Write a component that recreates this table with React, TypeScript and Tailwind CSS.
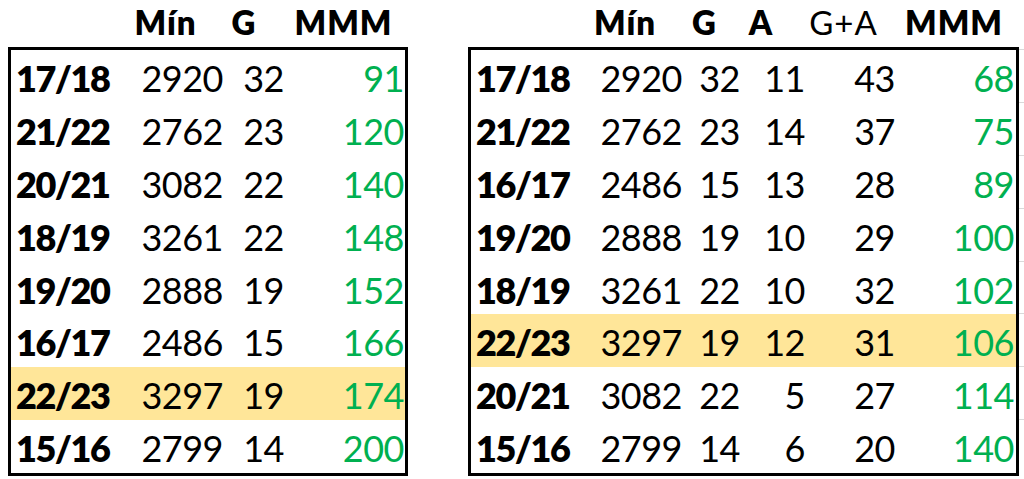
import React from "react";

type Row = (string | number)[];

const leftRows: Row[] = [
  ["17/18", 2920, 32, 91],
  ["21/22", 2762, 23, 120],
  ["20/21", 3082, 22, 140],
  ["18/19", 3261, 22, 148],
  ["19/20", 2888, 19, 152],
  ["16/17", 2486, 15, 166],
  ["22/23", 3297, 19, 174],
  ["15/16", 2799, 14, 200],
];

const rightRows: Row[] = [
  ["17/18", 2920, 32, 11, 43, 68],
  ["21/22", 2762, 23, 14, 37, 75],
  ["16/17", 2486, 15, 13, 28, 89],
  ["19/20", 2888, 19, 10, 29, 100],
  ["18/19", 3261, 22, 10, 32, 102],
  ["22/23", 3297, 19, 12, 31, 106],
  ["20/21", 3082, 22, 5, 27, 114],
  ["15/16", 2799, 14, 6, 20, 140],
];

function HeaderCell({ w, children, bold = true }: { w: string; children: React.ReactNode; bold?: boolean }) {
  return (
    <div className={`${w} flex justify-center whitespace-nowrap ${bold ? "font-extrabold" : "font-normal"}`}>
      {children}
    </div>
  );
}

function LeftTable() {
  return (
    <div className="flex flex-col w-[400px]">
      <div className="h-[47px] flex items-start pt-[6px] text-[33px] leading-none tracking-[1px]">
        <div className="w-[127px]" />
        <HeaderCell w="w-[61px]">Mín</HeaderCell>
        <div className="w-[28px]" />
        <HeaderCell w="w-[40px]">G</HeaderCell>
        <div className="w-[29px]" />
        <HeaderCell w="w-[101px]">MMM</HeaderCell>
      </div>
      <div className="h-[429px] border-[3px] border-black flex flex-col">
        {leftRows.map((r, i) => (
          <div
            key={i}
            className={`flex-1 flex items-start pt-[10px] text-[36px] leading-none tracking-[-0.5px] ${r[0] === "22/23" ? "bg-[#ffe699]" : ""}`}
          >
            <div className="w-[129px] pl-[5px] font-extrabold tracking-[-1.5px]">{r[0]}</div>
            <div className="w-[83px] text-right">{r[1]}</div>
            <div className="w-[61px] text-right">{r[2]}</div>
            <div className="w-[120px] text-right text-[#00b050]">{r[3]}</div>
          </div>
        ))}
      </div>
    </div>
  );
}

function RightTable() {
  return (
    <div className="flex flex-col w-[551px]">
      <div className="h-[47px] flex items-start pt-[6px] text-[33px] leading-none tracking-[1px]">
        <div className="w-[126px]" />
        <HeaderCell w="w-[62px]">Mín</HeaderCell>
        <div className="w-[34px]" />
        <HeaderCell w="w-[29px]">G</HeaderCell>
        <div className="w-[29px]" />
        <HeaderCell w="w-[26px]">A</HeaderCell>
        <div className="w-[36px]" />
        <HeaderCell w="w-[67px]" bold={false}>G+A</HeaderCell>
        <div className="w-[28px]" />
        <HeaderCell w="w-[98px]">MMM</HeaderCell>
      </div>
      <div className="h-[429px] border-[3px] border-black flex flex-col">
        {rightRows.map((r, i) => (
          <div
            key={i}
            className={`flex-1 flex items-start pt-[10px] text-[36px] leading-none tracking-[-0.5px] ${r[0] === "22/23" ? "bg-[#ffe699]" : ""}`}
          >
            <div className="w-[129px] pl-[5px] font-extrabold tracking-[-1.5px]">{r[0]}</div>
            <div className="w-[82px] text-right">{r[1]}</div>
            <div className="w-[58px] text-right">{r[2]}</div>
            <div className="w-[65px] text-right">{r[3]}</div>
            <div className="w-[90px] text-right">{r[4]}</div>
            <div className="w-[119px] text-right text-[#00b050]">{r[5]}</div>
          </div>
        ))}
      </div>
    </div>
  );
}

export default function App() {
  return (
    <div className="w-[1024px] h-[479px] bg-white text-black font-['Lato',sans-serif] flex overflow-hidden">
      <div className="w-[8px]" />
      <LeftTable />
      <div className="w-[60px]" />
      <RightTable />
      <div className="w-[5px] flex flex-col pt-[49px]">
        {Array.from({ length: 8 }).map((_, i) => (
          <div key={i} className="h-[52.875px] border-t border-[#d9d9d9]" />
        ))}
      </div>
    </div>
  );
}
